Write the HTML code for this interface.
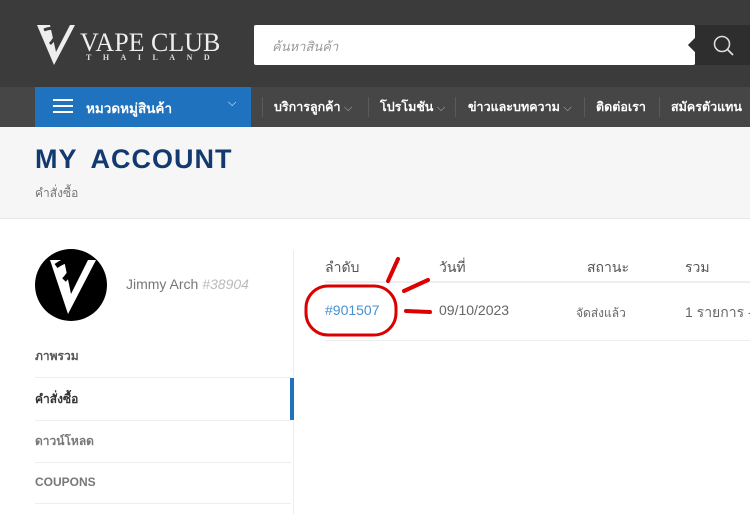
<!DOCTYPE html>
<html><head><meta charset="utf-8"><style>
*{margin:0;padding:0;box-sizing:border-box}
body{width:750px;height:514px;overflow:hidden;background:#fff;font-family:"Liberation Sans","Noto Sans CJK SC",sans-serif;position:relative}
.a{position:absolute}
.n{position:absolute;top:97px;color:#fff;font-size:12.5px;font-weight:bold;white-space:nowrap}
.c{font-weight:normal;color:#bbb;font-size:11px}
.s{position:absolute;top:97px;width:1px;height:20px;background:#5a5a5a}
</style></head><body>
<div class="a" style="left:0;top:0;width:750px;height:87px;background:#3b3b3b"></div>
<div class="a" style="left:0;top:87px;width:750px;height:40px;background:#464646"></div>
<svg class="a" style="left:36px;top:24px" width="40" height="42" viewBox="0 0 40 42"><path d="M1 1 L14 1 L20 28 L34 1 L39 1 L18 41 Z" fill="#eee"/><path d="M8 6 Q18 2 22 8 Q18 16 14 20" stroke="#3b3b3b" stroke-width="3" fill="none"/></svg>
<div class="a" style="left:80px;top:28px;color:#eee;font-family:'Liberation Serif',serif;font-size:26px">VAPE CLUB</div>
<div class="a" style="left:86px;top:53px;color:#ddd;font-family:'Liberation Serif',serif;font-size:8px;letter-spacing:11.5px;font-weight:bold">THAILAND</div>
<div class="a" style="left:254px;top:25px;width:441px;height:40px;background:#fff;border-radius:2px"></div>
<div class="a" style="left:272px;top:36px;color:#999;font-size:13px;font-style:italic">ค้นหาสินค้า</div>
<div class="a" style="left:695px;top:25px;width:55px;height:40px;background:#2e2e2e"></div>
<div class="a" style="left:690px;top:40px;width:10px;height:10px;background:#2e2e2e;transform:rotate(45deg)"></div>
<svg class="a" style="left:712px;top:34px" width="24" height="24" viewBox="0 0 24 24"><circle cx="10" cy="10" r="7.5" stroke="#ddd" stroke-width="1.6" fill="none"/><path d="M15.5 15.5 L21 21" stroke="#ddd" stroke-width="1.8"/></svg>
<div class="a" style="left:35px;top:87px;width:216px;height:40px;background:#1f72bd"></div>
<div class="a" style="left:53px;top:99px;width:20px;height:2px;background:#fff;box-shadow:0 6px 0 #fff,0 12px 0 #fff"></div>
<div class="a" style="left:86px;top:97px;color:#fff;font-size:13.5px;font-weight:bold">หมวดหมู่สินค้า</div>
<div class="a" style="left:228px;top:97px;color:#fff;font-size:11px">⌵</div>
<div class="s" style="left:262px"></div>
<div class="n" style="left:274px">บริการลูกค้า <span class="c">⌵</span></div>
<div class="s" style="left:368px"></div>
<div class="n" style="left:380px">โปรโมชัน <span class="c">⌵</span></div>
<div class="s" style="left:455px"></div>
<div class="n" style="left:468px">ข่าวและบทความ <span class="c">⌵</span></div>
<div class="s" style="left:584px"></div>
<div class="n" style="left:596px">ติดต่อเรา</div>
<div class="s" style="left:659px"></div>
<div class="n" style="left:671px">สมัครตัวแทน</div>
<div class="a" style="left:0;top:127px;width:750px;height:92px;background:#f6f6f6;border-bottom:1px solid #e6e6e6"></div>
<div class="a" style="left:35px;top:144px;color:#123a70;font-size:27px;font-weight:bold;letter-spacing:1px;word-spacing:6px">MY ACCOUNT</div>
<div class="a" style="left:35px;top:184px;color:#777;font-size:12px">คำสั่งซื้อ</div>
<div class="a" style="left:35px;top:249px;width:72px;height:72px;border-radius:50%;background:#000"></div>
<svg class="a" style="left:44px;top:252px" width="56" height="66" viewBox="0 0 56 66"><path d="M6 8 L20 8 L27 42 L44 8 L52 8 L24 62 Z" fill="#fff"/><path d="M12 14 Q26 4 30 14 Q24 24 20 28" stroke="#000" stroke-width="5" fill="none"/></svg>
<div class="a" style="left:126px;top:276px;color:#777;font-size:14px">Jimmy Arch <i style="color:#bbb">#38904</i></div>
<div class="a" style="left:293px;top:250px;width:1px;height:264px;background:#eee"></div>
<div class="a" style="left:290px;top:378px;width:4px;height:42px;background:#1f72bd"></div>
<div class="a" style="left:35px;top:347px;color:#555;font-size:12px;font-weight:bold">ภาพรวม</div>
<div class="a" style="left:35px;top:377px;width:256px;height:1px;background:#eee"></div>
<div class="a" style="left:35px;top:390px;color:#333;font-size:12px;font-weight:bold">คำสั่งซื้อ</div>
<div class="a" style="left:35px;top:420px;width:256px;height:1px;background:#eee"></div>
<div class="a" style="left:35px;top:432px;color:#777;font-size:12px;font-weight:bold">ดาวน์โหลด</div>
<div class="a" style="left:35px;top:462px;width:256px;height:1px;background:#eee"></div>
<div class="a" style="left:35px;top:475px;color:#777;font-size:12px;font-weight:bold">COUPONS</div>
<div class="a" style="left:35px;top:503px;width:256px;height:1px;background:#eee"></div>
<div class="a" style="left:325px;top:257px;color:#555;font-size:14px">ลำดับ</div>
<div class="a" style="left:439px;top:257px;color:#555;font-size:14px">วันที่</div>
<div class="a" style="left:587px;top:257px;color:#555;font-size:14px">สถานะ</div>
<div class="a" style="left:685px;top:257px;color:#555;font-size:14px">รวม</div>
<div class="a" style="left:325px;top:281px;width:425px;height:2px;background:#eee"></div>
<div class="a" style="left:325px;top:302px;color:#4a8fd0;font-size:14px">#901507</div>
<div class="a" style="left:439px;top:302px;color:#666;font-size:14px">09/10/2023</div>
<div class="a" style="left:576px;top:304px;color:#666;font-size:12px">จัดส่งแล้ว</div>
<div class="a" style="left:685px;top:302px;color:#666;font-size:14px;white-space:nowrap">1 รายการ -</div>
<div class="a" style="left:325px;top:340px;width:425px;height:1px;background:#eee"></div>
<svg class="a" style="left:300px;top:250px" width="140" height="90" viewBox="0 0 140 90"><rect x="6" y="36" width="90" height="49" rx="22" stroke="#d00" stroke-width="3" fill="none"/><path d="M88 31 L98 9 M104 41 L128 30 M106 61 L130 62" stroke="#d00" stroke-width="4" stroke-linecap="round"/></svg>
</body></html>
